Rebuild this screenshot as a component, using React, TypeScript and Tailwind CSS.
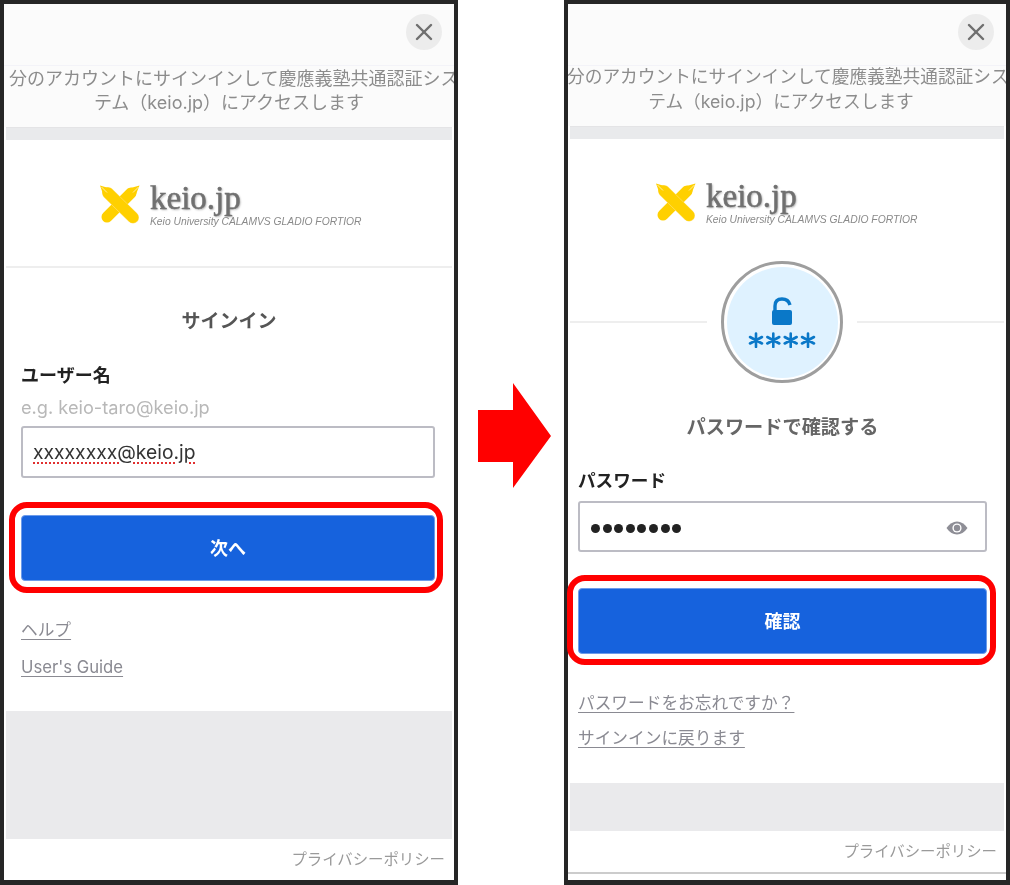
import { X } from 'lucide-react';

const sans = "[font-family:Inter,'Noto_Sans_CJK_JP',sans-serif]";

function CloseButton() {
  return (
    <div className="-mx-[2px] flex h-[61px] flex-none justify-end bg-[#fbfbfb] pt-[10px] pr-[12px]">
      <div className="flex h-[36px] w-[36px] items-center justify-center rounded-full bg-[#ececec]">
        <X size={28} strokeWidth={2.1} className="text-[#6f6f6f]" />
      </div>
    </div>
  );
}

function PenLogo() {
  return (
    <svg viewBox="0 0 40 40" className="h-[40px] w-[40px] flex-none">
      {/* back pen, nib top right */}
      <path d="M31 8 L7 32" stroke="#ffd000" strokeWidth="11" strokeLinecap="round" />
      <path d="M39.5 0.5 L27.1 4.1 L34.9 11.9 Z" fill="#ffd000" />
      {/* front pen, nib top left */}
      <path d="M8 8 L33 32.5" stroke="#ffe27a" strokeWidth="12" strokeLinecap="round" />
      <path d="M8 8 L33 32.5" stroke="#ffd000" strokeWidth="11" strokeLinecap="round" />
      <path d="M0 0.5 L11.9 4.1 L4.1 11.9 Z" fill="#ffd000" />
      <path d="M1.5 2 L7 7.5 M38.5 2 L33 7.5" stroke="#fff2b0" strokeWidth="0.9" />
    </svg>
  );
}

function Logo() {
  return (
    <div className="flex items-start gap-[10px]">
      <PenLogo />
      <div className="-mt-[5px]">
        <div className="font-['Liberation_Serif',serif] text-[33px] leading-[36px] text-[#707070] [-webkit-text-stroke:0.5px_#707070] [text-shadow:1px_1px_2px_#aaaaaa]">
          keio.jp
        </div>
        <div className="font-['Liberation_Sans',sans-serif] text-[10.3px] leading-[12px] whitespace-nowrap text-[#8a8a8a] italic">
          Keio University CALAMVS GLADIO FORTIOR
        </div>
      </div>
    </div>
  );
}

function HelpLink({ children }: { children: string }) {
  return <a className="block text-[16.7px] leading-[24px] text-[#8a8a92] underline underline-offset-[3px]">{children}</a>;
}

function SignInPanel() {
  return (
    <div className="flex h-full w-[458px] flex-none flex-col border-4 border-b-[5px] border-[#262626] px-[2px]">
      <CloseButton />
      <div className="-mx-[2px] h-[62px] flex-none overflow-hidden border-t border-[#f3f3f8] bg-[#fbfbfb] pt-[1px] text-center text-[18px] leading-[24px] text-[#8c8c8c]">
        <p className="pl-[5px] text-left whitespace-nowrap">分のアカウントにサインインして慶應義塾共通認証シス</p>
        <p>テム（keio.jp）にアクセスします</p>
      </div>
      <div className="h-[13px] flex-none border-t border-[#e4e4e6] bg-[#e9eaec]" />
      <div className="h-[126px] flex-none pt-[45px] pl-[94px]">
        <Logo />
      </div>
      <div className="h-[2px] flex-none bg-[#eeeeee]" />
      <div className="flex-1 px-[15px] pt-[40px]">
        <h2 className="text-center text-[19px] leading-[28px] font-bold text-[#555555]">サインイン</h2>
        <label className="mt-[27px] block text-[18px] leading-[26px] font-bold text-[#222222]">ユーザー名</label>
        <p className="mt-[5px] text-[18.2px] leading-[26px] text-[#b8b8b8]">e.g. keio-taro@keio.jp</p>
        <div className="mt-[6px] flex h-[52px] w-[414px] items-center rounded-[3px] border-2 border-[#bcbcc4] px-[10px] text-[19.3px] text-[#333333]">
          <span className="underline decoration-[#e03030] decoration-dotted decoration-[1.5px] underline-offset-[4px]">xxxxxxxx@keio.jp</span>
        </div>
        <div className="relative mt-[37px] w-[414px]">
          <div className="flex h-[66px] items-center justify-center rounded-[4px] border border-[#6d9bea] bg-[#1662dd] text-[18px] font-bold text-white">
            次へ
          </div>
          <div className="absolute -top-[13px] -right-[8px] -bottom-[12px] -left-[12px] rounded-[18px] border-[6px] border-[#ff0000]" />
        </div>
        <div className="mt-[37px]">
          <HelpLink>ヘルプ</HelpLink>
        </div>
        <div className="mt-[13px]">
          <HelpLink>User's Guide</HelpLink>
        </div>
      </div>
      <div className="h-[128px] flex-none bg-[#eaeaec]" />
      <div className="flex h-[41px] flex-none items-center justify-end pr-[7px] text-[15.4px] text-[#9a9a9a]">プライバシーポリシー</div>
    </div>
  );
}

function PasswordBadge() {
  return (
    <div className="flex items-center">
      <div className="h-[2px] w-[137px] flex-none bg-[#eeeeee]" />
      <div className="mx-[14px] flex h-[122px] w-[122px] flex-none items-center justify-center rounded-full border-[3px] border-[#9e9e9e] bg-white">
        <div className="flex h-[111px] w-[111px] items-center justify-center rounded-full bg-[#dff2ff]">
          <svg viewBox="0 0 70 52" className="h-[52px] w-[70px]">
            <path d="M28 15 V10 Q28 3 35 3 Q41.5 3 43 9" fill="none" stroke="#0a78c8" strokeWidth="3.4" />
            <rect x="25" y="14" width="20" height="15" rx="2" fill="#0a78c8" />
            <g stroke="#0a78c8" strokeWidth="2.6" strokeLinecap="round">
              <path d="M9 37.5 V51 M3 41 L15 47.5 M15 41 L3 47.5" />
              <path d="M26.3 37.5 V51 M20.3 41 L32.3 47.5 M32.3 41 L20.3 47.5" />
              <path d="M43.7 37.5 V51 M37.7 41 L49.7 47.5 M49.7 41 L37.7 47.5" />
              <path d="M61 37.5 V51 M55 41 L67 47.5 M67 41 L55 47.5" />
            </g>
          </svg>
        </div>
      </div>
      <div className="h-[2px] flex-1 bg-[#eeeeee]" />
    </div>
  );
}

function PasswordPanel() {
  return (
    <div className="flex h-full w-[446px] flex-none flex-col border-4 border-b-[5px] border-[#262626] px-[2px]">
      <CloseButton />
      <div className="-mx-[2px] h-[61px] flex-none overflow-hidden border-t border-[#f3f3f8] bg-[#fbfbfb] text-center text-[17.7px] leading-[25px] text-[#8c8c8c]">
        <p className="-mt-[2px] -ml-[1px] text-left whitespace-nowrap">分のアカウントにサインインして慶應義塾共通認証シス</p>
        <p className="pr-[12px]">テム（keio.jp）にアクセスします</p>
      </div>
      <div className="h-[13px] flex-none border-t border-[#e4e4e6] bg-[#e9eaec]" />
      <div className="h-[122px] flex-none pt-[44px] pl-[86px]">
        <Logo />
      </div>
      <PasswordBadge />
      <div className="flex-1 px-[8px] pt-[30px]">
        <h2 className="pr-[9px] text-center text-[19.2px] leading-[28px] font-bold text-[#666666]">パスワードで確認する</h2>
        <label className="mt-[27px] block text-[17.6px] leading-[26px] font-bold text-[#222222]">パスワード</label>
        <div className="mt-[7px] flex h-[51px] w-[409px] items-center justify-between rounded-[3px] border-2 border-[#bcbcc4] pt-[3px] pr-[17px] pl-[11px]">
          <div className="flex gap-[2.6px]">
            {[0, 1, 2, 3, 4, 5, 6, 7].map((i) => (
              <span key={i} className="h-[9px] w-[9px] rounded-full bg-[#222222]" />
            ))}
          </div>
          <svg viewBox="0 0 22 14" className="h-[14px] w-[22px]">
            <path d="M0.5 7 Q5 0.5 11 0.5 Q17 0.5 21.5 7 Q17 13.5 11 13.5 Q5 13.5 0.5 7 Z" fill="#8e8e96" />
            <circle cx="11" cy="7" r="4.6" fill="#ffffff" />
            <circle cx="11" cy="7" r="3.2" fill="#8e8e96" />
          </svg>
        </div>
        <div className="relative mt-[36px] w-[409px]">
          <div className="flex h-[66px] items-center justify-center rounded-[4px] border border-[#6d9bea] bg-[#1662dd] text-[18px] font-bold text-white">
            確認
          </div>
          <div className="absolute -top-[13px] -right-[9px] -bottom-[11px] -left-[11px] rounded-[18px] border-[6px] border-[#ff0000]" />
        </div>
        <div className="mt-[37px]">
          <HelpLink>パスワードをお忘れですか？</HelpLink>
        </div>
        <div className="mt-[11px]">
          <HelpLink>サインインに戻ります</HelpLink>
        </div>
      </div>
      <div className="h-[48px] flex-none bg-[#eaeaec]" />
      <div className="flex h-[41px] flex-none items-center justify-end pr-[7px] text-[15.4px] text-[#9a9a9a]">プライバシーポリシー</div>
      <div className="-mx-[2px] h-[2px] flex-none bg-[#cccccc]" />
      <div className="h-[6px] flex-none" />
    </div>
  );
}

export default function App() {
  return (
    <div className={`flex h-[885px] w-[1010px] bg-white blur-[0.4px] ${sans}`}>
      <SignInPanel />
      <div className="flex w-[106px] flex-none items-center pl-[20px]">
        <svg viewBox="0 0 73 105" className="-mt-[14px] h-[105px] w-[73px]">
          <path d="M0 27 H35 V0 L73 53 L35 105 V79 H0 Z" fill="#ff0000" />
        </svg>
      </div>
      <PasswordPanel />
    </div>
  );
}
